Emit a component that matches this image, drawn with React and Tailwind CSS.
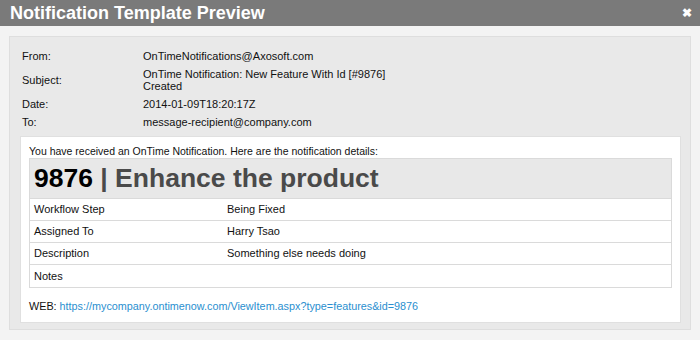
export default function App() {
  const rows = [
    ["Workflow Step", "Being Fixed"],
    ["Assigned To", "Harry Tsao"],
    ["Description", "Something else needs doing"],
    ["Notes", ""],
  ];
  const meta = [
    ["From:", "OnTimeNotifications@Axosoft.com"],
    ["Subject:", "OnTime Notification: New Feature With Id [#9876] Created"],
    ["Date:", "2014-01-09T18:20:17Z"],
    ["To:", "message-recipient@company.com"],
  ];
  return (
    <div className="w-[700px] h-[340px] bg-[#f3f3f3] flex flex-col font-['Liberation_Sans',Arial,sans-serif] text-[11px] text-[#111] overflow-hidden">
      <div className="h-[26px] bg-[#7a7a7a] flex items-center justify-between pl-[10px] pr-[8px] shrink-0">
        <span className="text-white font-bold text-[18px] leading-none">Notification Template Preview</span>
        <span className="text-white font-bold text-[12px] leading-none">✖</span>
      </div>
      <div className="mx-[9px] mt-[10px] h-[294px] bg-[#e9e9e9] border border-[#dedede] flex flex-col">
        <div className="pl-[12px] pt-[10px] flex flex-col">
          {meta.map(([k, v]) => (
            <div key={k} className="flex leading-[12px] py-[3px]">
              <div className="w-[121px] shrink-0 flex items-center">{k}</div>
              <div className="w-[250px]">{v}</div>
            </div>
          ))}
        </div>
        <div className="ml-[10px] mr-[9px] mt-[5px] bg-white border border-[#e0e0e0] h-[187px] px-[8px] pt-[8px]">
          <div className="leading-[13px] text-[10.5px]">You have received an OnTime Notification. Here are the notification details:</div>
          <div className="border border-[#dadada]">
            <div className="h-[40px] bg-[#e8e8e8] flex items-center pl-[4px] border-b border-[#dadada]">
              <span className="text-[26.5px] font-bold leading-none text-black">9876</span>
              <span className="text-[26.5px] font-bold leading-none text-[#4a4a4a] whitespace-pre"> | Enhance the product</span>
            </div>
            {rows.map(([k, v], i) => (
              <div key={k} className={`h-[22px] flex items-center pl-[4px] ${i < rows.length - 1 ? "border-b border-[#dadada]" : ""}`}>
                <div className="w-[193px] shrink-0">{k}</div>
                <div>{v}</div>
              </div>
            ))}
          </div>
          <div className="mt-[12px] leading-[13px] text-[10.8px]">
            WEB: <span className="text-[#2a8fcf]">https://mycompany.ontimenow.com/ViewItem.aspx?type=features&amp;id=9876</span>
          </div>
        </div>
      </div>
    </div>
  );
}
